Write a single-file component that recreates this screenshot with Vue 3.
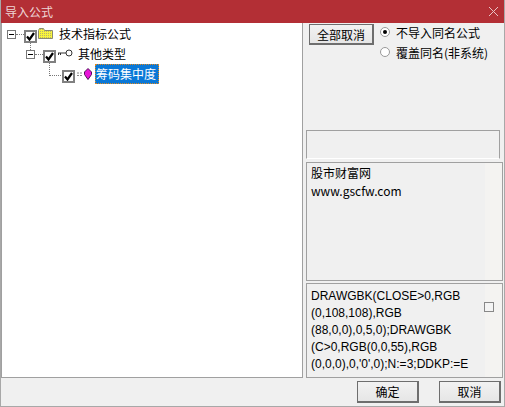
<script setup>
const rows = [
  { id: 1, label: "技术指标公式", indent: 5, icon: "folder", toggle: true },
  { id: 2, label: "其他类型", indent: 24, icon: "key", toggle: true },
  { id: 3, label: "筹码集中度", indent: 43, icon: "gem", toggle: false, selected: true },
];
</script>

<template>
  <div class="dialog">
    <header class="titlebar">
      <span>导入公式</span>
      <svg class="close" width="11" height="11" viewBox="0 0 11 11">
        <path d="M1 1l9 9M10 1l-9 9" stroke="#e8c4c6" fill="none" />
      </svg>
    </header>

    <div class="content">
      <div class="tree">
        <div v-for="row in rows" :key="row.id" class="row" :style="{ paddingLeft: row.indent + 'px' }">
          <span class="toggle" :class="{ hidden: !row.toggle }"><i></i></span>
          <span class="dots" :class="{ hidden: !row.toggle }"></span>
          <span class="check">
            <svg width="9" height="9" viewBox="0 0 9 9">
              <path d="M1 4.500l2.500 3L8 1" stroke="#000" stroke-width="2.2" fill="none" />
            </svg>
          </span>
          <svg v-if="row.icon === 'folder'" class="icon" width="16" height="14" viewBox="0 0 16 14">
            <defs>
              <pattern id="dither" width="2" height="2" patternUnits="userSpaceOnUse">
                <rect width="2" height="2" fill="#f8f43c" />
                <rect width="1" height="1" fill="#b8b46c" />
              </pattern>
            </defs>
            <path d="M0.500 11.500v-8l1-2h4l1 2h8v8z" fill="url(#dither)" stroke="#8a8a70" />
          </svg>
          <svg v-else-if="row.icon === 'key'" class="icon" width="16" height="14" viewBox="0 0 16 14">
            <circle cx="12" cy="6" r="3" fill="#fff" stroke="#333" />
            <path d="M1 6h8M1.500 6v2M3.500 6v2" stroke="#333" fill="none" />
          </svg>
          <svg v-else class="icon" width="16" height="14" viewBox="0 0 16 14">
            <path d="M1 6h6M1 8.500h6" stroke="#888" stroke-dasharray="2 1" fill="none" />
            <path d="M12 1.500l3.500 3.500v2.500L12 12.500 8.500 7.500V5z" fill="#e814d8" stroke="#50105a" />
          </svg>
          <span class="label" :class="{ selected: row.selected }">{{ row.label }}</span>
        </div>
        <span class="link link-a"></span>
        <span class="link link-b"></span>
      </div>

      <aside class="side">
        <div class="options">
          <button class="btn cancel-all">全部取消</button>
          <div class="radios">
            <label class="radio"><span class="dot on"></span>不导入同名公式</label>
            <label class="radio"><span class="dot"></span>覆盖同名(非系统)</label>
          </div>
        </div>
        <div class="status"></div>
        <div class="info">股市财富网<br />www.gscfw.com</div>
        <div class="code">
          <p>DRAWGBK(CLOSE&gt;0,RGB<br />(0,108,108),RGB<br />(88,0,0),0,5,0);DRAWGBK<br />(C&gt;0,RGB(0,0,55),RGB<br />(0,0,0),0,'0',0);N:=3;DDKP:=E</p>
          <span class="small-check"></span>
        </div>
      </aside>
    </div>

    <footer class="footer">
      <button class="btn">确定</button>
      <button class="btn">取消</button>
    </footer>
  </div>
</template>

<style>
html, body {
  margin: 0;
  background: #f0f0f0;
}
</style>

<style scoped>
.dialog {
  width: 505px;
  height: 407px;
  box-sizing: border-box;
  display: flex;
  flex-direction: column;
  background: #f0f0f0;
  border: 1px solid #a8a8a8;
  border-top: none;
  font-family: "Noto Sans CJK SC", "Liberation Sans", sans-serif;
  font-size: 12px;
  color: #000;
  overflow: hidden;
}

.titlebar {
  height: 23px;
  flex: none;
  display: flex;
  align-items: center;
  justify-content: space-between;
  padding: 0 5px 0 4px;
  background: #b32f35;
  color: #eed6d7;
}

.content {
  flex: 1;
  display: flex;
  min-height: 0;
  gap: 3px;
  padding-right: 1px;
}

.tree {
  position: relative;
  width: 302px;
  box-sizing: border-box;
  padding-top: 1px;
  background: #fff;
  border: 1px solid #a0a0a0;
  border-width: 0 1px 1px 1px;
}

.row {
  height: 20px;
  display: flex;
  align-items: center;
}

.toggle {
  width: 9px;
  height: 9px;
  box-sizing: border-box;
  border: 1px solid #777;
  display: flex;
  align-items: center;
  justify-content: center;
  flex: none;
  background: #fff;
}

.toggle i {
  width: 5px;
  height: 1px;
  background: #000;
}

.toggle.hidden {
  visibility: hidden;
}

.dots {
  width: 8px;
  border-top: 1px dotted #777;
  flex: none;
}

.dots.hidden {
  visibility: hidden;
}

.check {
  width: 13px;
  height: 13px;
  margin-top: 5px;
  box-sizing: border-box;
  border: 2px solid #808080;
  background: #fff;
  display: flex;
  align-items: center;
  justify-content: center;
  flex: none;
}

.icon {
  margin-left: 1px;
  flex: none;
}

.label {
  margin-left: 4px;
  line-height: 20px;
  padding: 0 1px;
}

.label.selected {
  margin-left: 3px;
  padding-right: 3px;
  background: #0a78d7;
  color: #fff;
  outline: 1px dotted #e08a20;
  outline-offset: -1px;
}

.link {
  position: absolute;
  border-left: 1px dotted #777;
}

.link-a {
  left: 28px;
  top: 20px;
  height: 7px;
}

.link-b {
  left: 47px;
  top: 40px;
  height: 12px;
  width: 13px;
  border-bottom: 1px dotted #777;
}

.side {
  flex: 1;
  min-width: 0;
  display: flex;
  flex-direction: column;
}

.options {
  height: 107px;
  flex: none;
  display: flex;
  align-items: flex-start;
  padding: 1px 0 0 3px;
  box-sizing: border-box;
}

.btn {
  width: 62px;
  height: 22px;
  padding: 0;
  font: inherit;
  color: #000;
  background: linear-gradient(#f2f2f2, #e6e6e6);
  border: 2px solid #6e6e6e;
  border-width: 1px 2px 2px 1px;
  box-sizing: border-box;
}

.cancel-all {
  width: 65px;
  height: 21px;
  flex: none;
}

.radios {
  margin-left: 6px;
  display: flex;
  flex-direction: column;
  gap: 4px;
}

.radio {
  display: flex;
  align-items: center;
  gap: 6px;
  height: 16px;
}

.dot {
  width: 10px;
  height: 10px;
  box-sizing: border-box;
  border-radius: 50%;
  border: 1px solid #999;
  background: #fff;
  display: flex;
  align-items: center;
  justify-content: center;
}

.dot.on::after {
  content: "";
  width: 4px;
  height: 4px;
  border-radius: 50%;
  background: #000;
}

.status {
  width: 194px;
  height: 29px;
  flex: none;
  box-sizing: border-box;
  border: 1px solid #a0a0a0;
  border-bottom-color: #fff;
  margin-bottom: 3px;
}

.info {
  height: 119px;
  flex: none;
  box-sizing: border-box;
  border: 1px solid #a0a0a0;
  padding: 1px 4px;
  line-height: 18px;
  margin-bottom: 2px;
  background: linear-gradient(to right, #f0f0f0 178px, #f4f3f1 178px);
}

.code {
  flex: 1;
  display: flex;
  align-items: center;
  box-sizing: border-box;
  border: 1px solid #a0a0a0;
  padding: 0 8px 0 4px;
  background: linear-gradient(to right, #f0f0f0 178px, #f4f3f1 178px);
}

.code p {
  flex: 1;
  margin: 0 0 1px;
  line-height: 17px;
  white-space: nowrap;
  font-family: "Liberation Sans", sans-serif;
}

.small-check {
  width: 10px;
  height: 10px;
  box-sizing: border-box;
  border: 1px solid #888;
  background: #f4f4f4;
  flex: none;
  align-self: flex-start;
  margin-top: 18px;
}

.footer {
  height: 28px;
  flex: none;
  display: flex;
  justify-content: flex-end;
  align-items: center;
  padding-right: 3px;
  gap: 20px;
}
</style>
